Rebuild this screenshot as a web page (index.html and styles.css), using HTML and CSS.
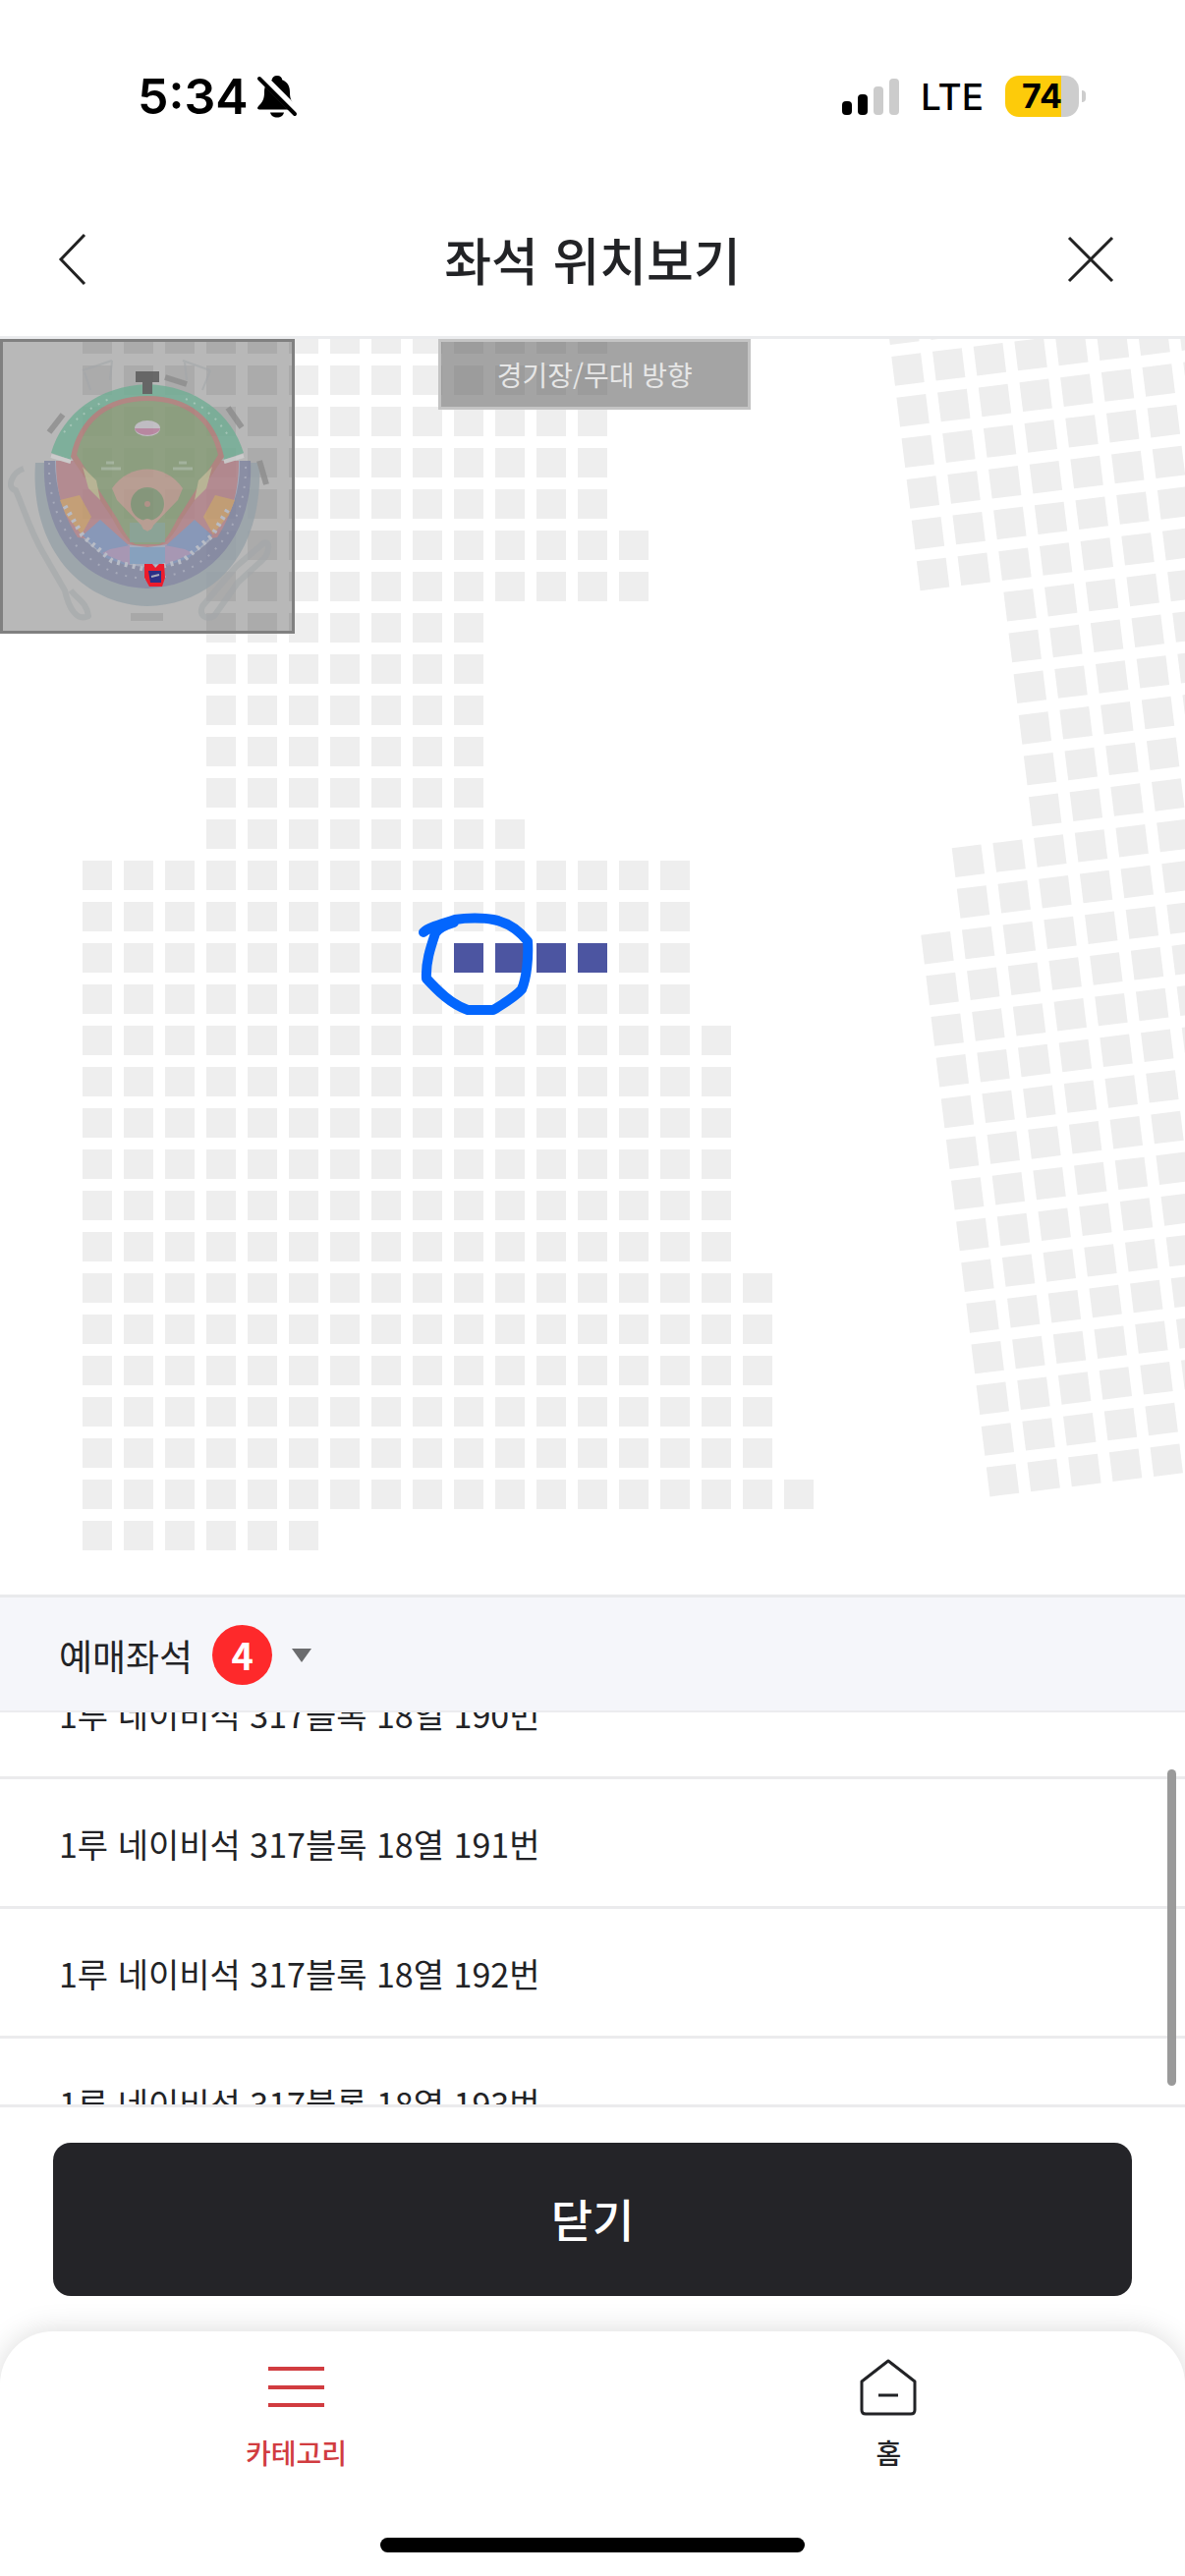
FILE: index.html
```html
<!DOCTYPE html>
<html lang="ko">
<head>
<meta charset="utf-8">
<meta name="viewport" content="width=device-width, initial-scale=1">
<title>좌석 위치보기</title>
<link rel="stylesheet" href="styles.css">
</head>
<body>
<div class="app">
  <div class="status">
    <div class="status-left">
      <span class="time">5:34</span>
      <svg class="bell" width="42" height="44" viewBox="0 0 42 44" aria-hidden="true">
        <path d="M21 1c-3.200 0-5 2-5.200 4.200C10 7.500 8 12 8 18c0 7-2 10-5.500 13.500C0 34 1 35.500 4 35.500h34c3 0 4-1.500 1.500-4C36 28 34 25 34 18c0-6-2-10.500-7.800-12.800C26 3 24.200 1 21 1z"/>
        <path d="M14 38.500h14c-.5 3-3.500 5-7 5s-6.500-2-7-5z"/>
        <path d="M4 1l38 38" stroke="#fff" stroke-width="9"/>
        <path d="M3 4l36 36" stroke="#000" stroke-width="4" stroke-linecap="round"/>
      </svg>
    </div>
    <div class="status-right">
      <svg width="58" height="37" viewBox="0 0 58 37" aria-hidden="true">
        <rect x="0" y="23" width="10" height="14" rx="4"/>
        <rect x="16" y="16" width="10" height="21" rx="4"/>
        <rect x="32" y="8" width="10" height="29" rx="4" fill="#ccc"/>
        <rect x="48" y="0" width="10" height="37" rx="4" fill="#ccc"/>
      </svg>
      <span class="network">LTE</span>
      <span class="battery"><span class="battery-level">74</span></span>
    </div>
  </div>

  <header class="topbar">
    <button class="icon-btn" aria-label="뒤로">
      <svg width="30" height="54" viewBox="0 0 30 54"><path d="M28 2L4 27l24 25" fill="none" stroke="#222" stroke-width="3"/></svg>
    </button>
    <h1>좌석 위치보기</h1>
    <button class="icon-btn" aria-label="닫기">
      <svg width="48" height="48" viewBox="0 0 48 48"><path d="M2 2l44 44M46 2L2 46" fill="none" stroke="#222" stroke-width="3"/></svg>
    </button>
  </header>

  <main class="map">
    <svg class="seats" viewBox="0 345 1206 1278" role="img" aria-label="좌석 배치도">
      <!-- each dash of a row is one seat: 30 wide, 12 apart -->
      <g class="seat-rows">
        <path d="M84 345H618M84 387H618M84 429H618M84 471H618M84 513H618"/>
        <path d="M210 555H660M210 597H660"/>
        <path d="M210 639H492M210 681H492M210 723H492M210 765H492M210 807H492M210 849H534"/>
        <path d="M84 891H702M84 933H702M84 975H450M630 975H702M84 1017H702"/>
        <path d="M84 1059H744M84 1101H744M84 1143H744M84 1185H744M84 1227H744M84 1269H744"/>
        <path d="M84 1311H786M84 1353H786M84 1395H786M84 1437H786M84 1479H786M84 1521H828M84 1563H324"/>
      </g>
      <g class="seat-rows" transform="translate(924 376) rotate(-7)">
        <path d="M-15 -42H400M-15 0H400M-15 42H400M-15 84H400M-15 126H400M-15 168H400M-15 210H400"/>
        <path d="M69 252H400M69 294H400M69 336H400M69 378H400M69 420H400M69 462H400"/>
        <path d="M-15 504H400M-15 546H400"/>
        <path d="M-57 588H400M-57 630H400M-57 672H400M-57 714H400M-57 756H400M-57 798H400M-57 840H400M-57 882H400M-57 924H400M-57 966H400M-57 1008H400M-57 1050H400M-57 1092H400M-57 1134H400"/>
      </g>
      <path class="seat-rows selected" d="M462 975H618"/>
      <path d="M431 949C436 944 448 941 463 936C475 934 492 934 502 936C518 939 529 948 537 958C538 975 536 995 531 1007C525 1014 512 1022 502 1028H476C459 1022 446 1009 434 996C433 980 438 965 443 950C446 945 452 942 462 939" fill="none" stroke="#0366fd" stroke-width="10" stroke-linecap="round" stroke-linejoin="round"/>
    </svg>

    <div class="minimap">
      <svg viewBox="0 0 300 300" role="img" aria-label="경기장 전체 보기">
        <g fill="none" stroke="#a3a7aa" stroke-width="6" stroke-linejoin="round" opacity=".7">
          <path d="M24 132c-12 4-18 20-8 22 8 18 14 40 28 64l22 38c4 18 12 32 24 26-2-14-10-16-18-26M268 208c8-4 6 12-2 18l-24 22-24 34c-8 4-16 0-12-10l34-40z"/>
          <path d="M84 32l30-10M86 34l6 18M114 22l-2 20M186 22l28 10M214 32l-8 20M188 24l2 18" stroke-width="2"/>
        </g>
        <path d="M36 126h228c4 90-44 144-114 146C82 270 30 212 36 126z" fill="#97a2a9"/>
        <path d="M45 124h210c4 76-42 128-105 130C86 252 42 202 45 124z" fill="#7f84a0"/>
        <path d="M56 124h188c2 58-36 106-94 108C92 230 56 182 56 124z" fill="#a0a9bd"/>
        <path d="M57 124h186c0 34-8 56-22 78l-71 10-71-10c-14-22-22-44-22-78z" fill="#b38088"/>
        <path d="M61 164l20-5 12 22-10 18-16-20zM239 164l-20-5-12 22 10 18 16-20z" fill="#c79a68"/>
        <path d="M84 200l18-16 30 27-2 20-22-8zM216 200l-18-16-30 27 2 20 22-8z" fill="#7d91b8"/>
        <path d="M112 214l20-4v20l-28-12zM188 214l-20-4v20l28-12z" fill="#a48fb2"/>
        <path d="M132 212h36v17h-36z" fill="#7c9cc0"/>
        <path d="M52 116C64 76 100 48 150 46c50 2 86 30 98 70l-20 7c-10-40-36-62-78-62s-68 22-78 62z" fill="#70ae94"/>
        <path d="M72 120c8-40 36-62 78-62s70 22 78 62l-42 62c-8 16-18 28-24 28h-24c-6 0-16-12-24-28z" fill="#b07b76"/>
        <path d="M78 118c8-36 34-55 72-55s64 19 72 55l-42 66c-6 12-12 22-18 25h-24c-6-3-12-13-18-25z" fill="#859b75"/>
        <path d="M84 130l14 14 4 20-12-12zM216 130l-14 14-4 20 12-12z" fill="#b9b48d"/>
        <path d="M132 187h36v20h-36z" fill="#809f8e"/>
        <path d="M114 152c18-26 54-26 72 0l-5 12-31 32-31-32z" fill="#b9988a"/>
        <circle cx="150" cy="168" r="17" fill="#7c9270"/>
        <circle cx="150" cy="168" r="3" fill="#b38d80"/>
        <circle cx="150" cy="189" r="6" fill="#b9988a"/>
        <path d="M138 33h24v11h-7v12h-10V44h-7z" fill="#555"/>
        <ellipse cx="150" cy="91" rx="13" ry="8" fill="#c5c1c8"/>
        <path d="M137 91h26c-2 9-24 9-26 0z" fill="#ba7f9e"/>
        <path d="M103 132h20M176 132h20M108 126h8M182 126h8" stroke="#a2b49a" stroke-width="3"/>
        <path d="M50 95l14-18M232 70l14 20M168 39l22 7M264 124l7 24" stroke="#8d8d8d" stroke-width="6"/>
        <path d="M52 119l20 6M248 119l-20 6" stroke="#d0d0d0" stroke-width="4"/>
        <path d="M66 170l18 30 30 26 36 9 36-9 30-26 18-30" fill="none" stroke="#b9bdca" stroke-width="5" stroke-dasharray="3 5"/>
        <path d="M50 126c-2 62 36 116 100 118 64-2 102-56 100-118" fill="none" stroke="#a3a7bb" stroke-width="2" stroke-dasharray="2 8"/>
        <path d="M65 95l14-14 16-12 16-8M189 61l16 8 16 14 12 16" fill="none" stroke="#a1c9b8" stroke-width="2" stroke-dasharray="2 7"/>
        <path d="M133 279h33v8h-33z" fill="#a5a5a5"/>
      </svg>
      <svg class="marker" viewBox="0 0 300 300" aria-hidden="true">
        <path d="M147 229h8l3 4 4-4h5l1 14-3 9h-13l-5-9z" fill="#ec1c2c"/>
        <path d="M151 236h13v12h-11z" fill="#2c2f86"/>
        <path d="M154 242l8-2" stroke="#aab" stroke-width="2"/>
      </svg>
    </div>
    <div class="stage">경기장/무대 방향</div>
  </main>

  <section class="booking">
    <button class="booking-head" aria-expanded="true">
      <span>예매좌석</span>
      <span class="count">4</span>
      <svg width="20" height="14" viewBox="0 0 20 14" aria-hidden="true"><path d="M0 0h20L10 14z" fill="#6b6c6e"/></svg>
    </button>
    <div class="list-wrap">
      <ul class="seat-list">
        <li>1루 네이비석 317블록 18열 190번</li>
        <li>1루 네이비석 317블록 18열 191번</li>
        <li>1루 네이비석 317블록 18열 192번</li>
        <li>1루 네이비석 317블록 18열 193번</li>
      </ul>
      <span class="scroll-thumb"></span>
    </div>
  </section>

  <div class="action"><button class="close-btn">닫기</button></div>

  <nav class="tabs">
    <div class="tab-row">
      <a class="tab active" href="#category">
        <svg width="60" height="60" viewBox="0 0 60 60" aria-hidden="true"><path d="M1 11h57M1 30h57M1 48h57" stroke="currentColor" stroke-width="4"/></svg>
        <span>카테고리</span>
      </a>
      <a class="tab" href="#home">
        <svg width="60" height="60" viewBox="0 0 60 60" aria-hidden="true"><path d="M29 3L2 24v29q0 4 4 4h46q4 0 4-4V24zM19 38h20" fill="none" stroke="currentColor" stroke-width="3" stroke-linejoin="round"/></svg>
        <span>홈</span>
      </a>
    </div>
    <span class="home-bar"></span>
  </nav>
</div>
</body>
</html>
```
FILE: styles.css
```css
* { box-sizing: border-box; }

body {
  margin: 0;
  background: #fff;
  color: #222326;
  font-family: "Noto Sans CJK KR", "Noto Sans", sans-serif;
}

button {
  border: 0;
  padding: 0;
  background: none;
  color: inherit;
  font: inherit;
  cursor: pointer;
}

svg { display: block; flex: none; }

.app {
  display: flex;
  flex-direction: column;
  min-height: 100vh;
}

/* status bar */
.status {
  display: flex;
  align-items: center;
  justify-content: space-between;
  height: 196px;
  padding: 0 108px 0 140px;
  color: #000;
  font-family: Inter, "Liberation Sans", sans-serif;
}

.status-left,
.status-right { display: flex; align-items: center; }

.status-left { gap: 8px; }
.time { font-size: 50px; font-weight: 600; }
.network { margin: 0 22px; font-size: 37px; font-weight: 500; }

.battery {
  position: relative;
  width: 75px;
  height: 42px;
  border-radius: 14px;
  background: linear-gradient(90deg, #fdcb0a 76%, #cdcdcd 76%);
}

.battery::after {
  content: "";
  position: absolute;
  right: -7px;
  top: 15px;
  width: 4px;
  height: 12px;
  border-radius: 0 4px 4px 0;
  background: #cdcdcd;
}

.battery-level {
  display: block;
  line-height: 42px;
  text-align: center;
  font-size: 34px;
  font-weight: 700;
}

/* title bar */
.topbar {
  display: grid;
  grid-template-columns: 1fr auto 1fr;
  align-items: center;
  height: 149px;
  padding: 0 72px 10px 58px;
  border-bottom: 3px solid #ebecee;
}

.topbar h1 {
  margin: 0;
  padding-left: 14px;
  font-size: 52px;
  font-weight: 500;
  line-height: 76px;
}

.icon-btn { justify-self: start; }
.icon-btn:last-child { justify-self: end; }

/* seat map */
.map { position: relative; }
.seats { width: 100%; height: auto; }

.seat-rows {
  fill: none;
  stroke: #eee;
  stroke-width: 30;
  stroke-dasharray: 30 12;
}

.selected { stroke: #4c55a1; }

.minimap {
  position: absolute;
  left: 0;
  top: 0;
  width: 300px;
  height: 300px;
  background: rgba(0, 0, 0, .28);
}

.minimap svg { width: 100%; height: 100%; opacity: .8; }

.minimap .marker {
  position: absolute;
  inset: 0;
  opacity: 1;
}

.minimap::after {
  content: "";
  position: absolute;
  inset: 0;
  border: 3px solid #808080;
}

.stage {
  position: absolute;
  left: 37%;
  top: 0;
  width: 318px;
  height: 72px;
  border: 3px solid #c4c4c4;
  background: rgba(90, 90, 90, .55);
  color: #e6e6e6;
  font-size: 28px;
  line-height: 66px;
  text-align: center;
}

/* booked seats */
.booking-head {
  display: flex;
  align-items: center;
  gap: 20px;
  width: 100%;
  height: 120px;
  padding: 2px 60px 0;
  border-top: 3px solid #e9eaec;
  border-bottom: 2px solid #ececef;
  background: #f5f6fa;
  font-size: 37px;
}

.count {
  width: 61px;
  height: 61px;
  border-radius: 50%;
  background: #fe292b;
  color: #fff;
  font-size: 38px;
  font-weight: 700;
  line-height: 60px;
  text-align: center;
}

.list-wrap {
  position: relative;
  height: 402px;
  overflow: hidden;
  border-bottom: 3px solid #ebebed;
}

/* the list is scrolled part of the way down */
.seat-list {
  margin: -64px 0 0;
  padding: 0;
  list-style: none;
  font-size: 34px;
}

.seat-list li {
  height: 132px;
  padding: 0 60px;
  border-bottom: 3px solid #ebebed;
  line-height: 132px;
}

.scroll-thumb {
  position: absolute;
  right: 9px;
  top: 58px;
  width: 9px;
  height: 322px;
  border-radius: 5px;
  background: #9a9a9a;
}

.action { padding: 36px 54px; }

.close-btn {
  width: 100%;
  height: 156px;
  padding-bottom: 4px;
  border-radius: 18px;
  background: #242428;
  color: #fff;
  font-size: 46px;
  font-weight: 500;
}

/* bottom tabs */
.tabs {
  display: flex;
  flex: 1;
  flex-direction: column;
  align-items: center;
  justify-content: space-between;
  padding: 27px 0 24px;
  border-radius: 54px 54px 0 0;
  background: #fff;
  box-shadow: 0 0 30px rgba(0, 0, 0, .15);
}

.tab-row { display: flex; width: 100%; }

.tab {
  display: flex;
  flex: 1;
  flex-direction: column;
  align-items: center;
  gap: 16px;
  color: #222326;
  font-size: 28px;
  font-weight: 500;
  line-height: 40px;
  text-decoration: none;
}

.active { color: #d13c40; }

.home-bar {
  width: 432px;
  height: 15px;
  border-radius: 8px;
  background: #000;
}
```
